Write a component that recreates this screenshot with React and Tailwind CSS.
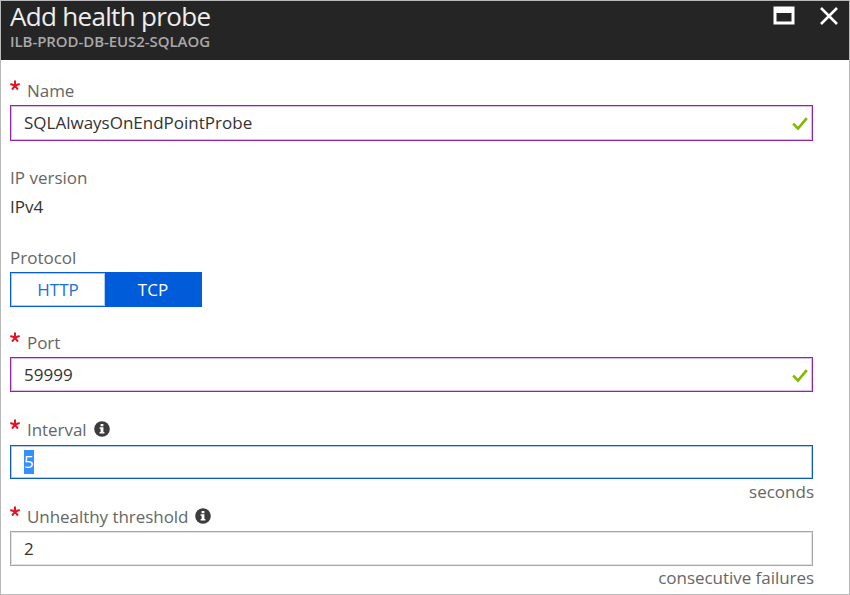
function Star() {
  return (
    <svg className="mt-px h-[11px] w-[10px] shrink-0" viewBox="0 0 10 11" fill="none" stroke="#e81123" strokeWidth="2">
      <path d="M5 0.5V5.5M0.3 4 5 5.5M9.7 4 5 5.5M2.1 9.6 5 5.5M7.9 9.6 5 5.5" />
    </svg>
  );
}

function Info() {
  return (
    <svg className="mt-[3px] h-4 w-4 shrink-0" viewBox="0 0 16 16">
      <circle cx="8" cy="8" r="7.8" fill="#3c3c3c" />
      <path d="M6.6 3h2.8v2.2H6.6zM5.6 6.3h3.8v4.8h1v1.5H5.6v-1.5h1V7.8h-1z" fill="#fff" />
    </svg>
  );
}

function Check() {
  return (
    <svg className="mt-[2px] h-[14px] w-4" viewBox="0 0 16 14" fill="none" stroke="#7fba00" strokeWidth="2.6">
      <path d="M1.2 6.6 6 11.6 14.8 1.2" />
    </svg>
  );
}

function Label({ text, info, className }) {
  return (
    <div className={"flex h-6 " + className}>
      <Star />
      <span className="ml-[7px] tracking-[-0.05px]">{text}</span>
      {info && <span className="ml-[7px]"><Info /></span>}
    </div>
  );
}

function Field({ children, valid, className }) {
  return (
    <div className={"flex w-[803px] items-center justify-between border pr-[4px] pl-[13px] text-[#333] " + className}>
      {children}
      {valid && <Check />}
    </div>
  );
}

export default function App() {
  return (
    <div className="flex h-[595px] w-[850px] flex-col overflow-hidden border border-[#bababa] bg-white font-['Open_Sans','Noto_Sans',sans-serif] text-[17px] leading-6 whitespace-nowrap text-[#666]">
      <header className="flex h-[59px] shrink-0 justify-between bg-[#252525] pl-[9px]">
        <div>
          <h1 className="h-[30px] text-[26px] leading-[30px] font-normal tracking-[-0.68px] text-[#eee]">Add health probe</h1>
          <div className="text-[15px] leading-[21px] font-semibold tracking-[-0.07px] text-[#a9a9a9]">ILB-PROD-DB-EUS2-SQLAOG</div>
        </div>
        <div className="flex pt-[5px] pr-[11px]">
          <svg className="h-[19px] w-[22px]" viewBox="0 0 22 19">
            <path fillRule="evenodd" d="M0.5 0.5h21v18h-21zM3.5 7v8.5h15V7z" fill="#fff" />
          </svg>
          <svg className="ml-[25px] h-[19px] w-[18px]" viewBox="0 0 18 19" stroke="#fff" strokeWidth="2.5">
            <path d="M1 2l16 16M17 2l-16 16" />
          </svg>
        </div>
      </header>
      <main className="pl-[9px]">
        <Label className="mt-[19px]" text="Name" />
        <Field className="mt-[2px] h-9 border-[#8e24aa] shadow-[inset_0_0_0_1px_#8e24aa50]" valid>
          <span className="-mt-px">SQLAlwaysOnEndPointProbe</span>
        </Field>
        <div className="mt-[25px]">IP version</div>
        <div className="mt-[5px] text-[#333]">IPv4</div>
        <div className="mt-[27px]">Protocol</div>
        <div className="mt-[2px] flex h-[35px] w-[192px] border border-[#015cda] text-center leading-[33px]">
          <div className="w-[94px] text-[#1a6fe0] shadow-[inset_0_0_0_1px_#015cda50]">HTTP</div>
          <div className="flex-1 bg-[#015cda] font-medium text-white">TCP</div>
        </div>
        <Label className="mt-6" text="Port" />
        <Field className="mt-[2px] h-[35px] border-[#8e24aa] shadow-[inset_0_0_0_1px_#8e24aa50]" valid>
          <span>59999</span>
        </Field>
        <Label className="mt-[26px]" text="Interval" info />
        <Field className="mt-[3px] h-[34px] border-[#0b5cb5] shadow-[inset_0_0_0_1px_#0b5cb550]">
          <span className="bg-[#3390ff] text-white">5</span>
        </Field>
        <div className="mt-px w-[804px] text-right">seconds</div>
        <Label className="mt-px" text="Unhealthy threshold" info />
        <Field className="mt-[2px] h-[35px] border-[#a6a6a6] shadow-[inset_0_0_0_1px_#a6a6a650]">
          <span>2</span>
        </Field>
        <div className="w-[804px] text-right tracking-[-0.04px]">consecutive failures</div>
      </main>
    </div>
  );
}
